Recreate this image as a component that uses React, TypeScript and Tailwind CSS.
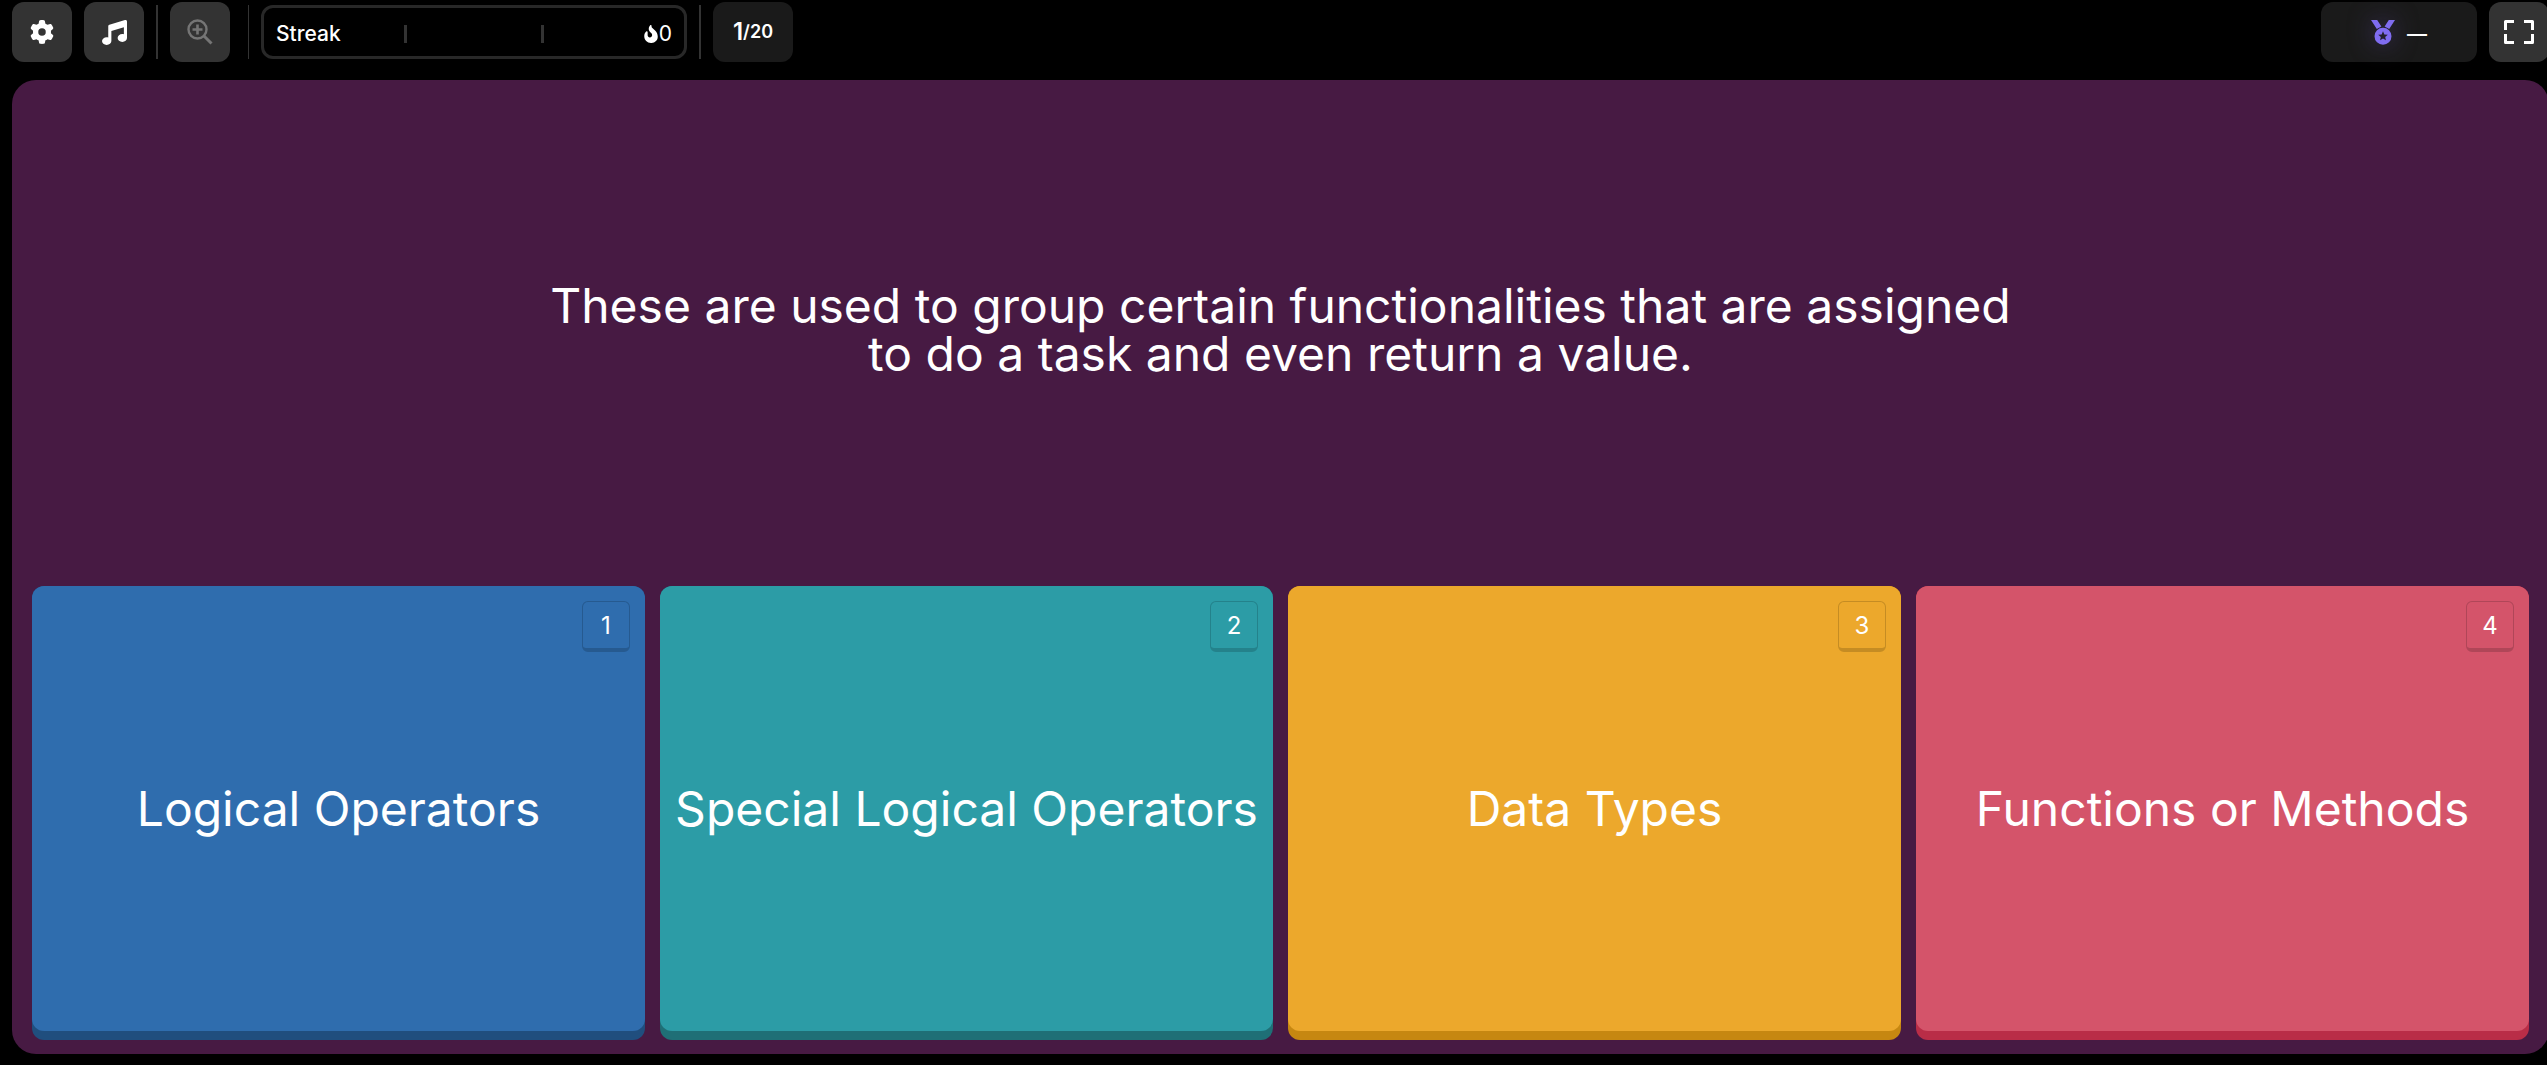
import type { ReactNode } from "react";
import { FaFireFlameCurved, FaGear, FaMusic } from "react-icons/fa6";

function ZoomInIcon() {
  return (
    <svg viewBox="0 0 26 26" className="size-[26px]" fill="none" stroke="currentColor" aria-hidden="true">
      <circle cx="10.5" cy="10.5" r="9" strokeWidth="2.4" />
      <path d="M10.5 5.5v10M5.5 10.5h10" strokeWidth="2.6" />
      <path d="M17 17l7.5 7.5" strokeWidth="3" />
    </svg>
  );
}

function MedalIcon() {
  return (
    <svg viewBox="0 0 24 25" className="h-[25px] w-6" fill="currentColor" aria-hidden="true">
      <path d="M0 0h6.2l4.2 6.6-4.6 2.4zM24 0h-6.2l-4.2 6.6 4.6 2.4z" />
      <path
        fillRule="evenodd"
        d="M12 7.8a8.5 8.5 0 1 1 0 17a8.5 8.5 0 0 1 0-17zM12 11.3L13.35 14.44L16.76 14.75L14.19 17.01L14.94 20.35L12 18.6L9.06 20.35L9.81 17.01L7.24 14.75L10.65 14.44z"
      />
    </svg>
  );
}

function FullscreenIcon() {
  return (
    <svg viewBox="0 0 30 24" className="h-6 w-[30px]" fill="none" stroke="currentColor" strokeWidth="3" strokeLinejoin="round" aria-hidden="true">
      <path d="M1.5 10V1.5H10M20 1.5h8.5V10M1.5 14v8.5H10M20 22.5h8.5V14" />
    </svg>
  );
}

function IconButton({ label, disabled, children }: { label: string; disabled?: boolean; children: ReactNode }) {
  return (
    <button
      type="button"
      aria-label={label}
      disabled={disabled}
      className="flex size-[60px] shrink-0 items-center justify-center rounded-xl bg-[#333333] text-white disabled:text-[#757575]"
    >
      {children}
    </button>
  );
}

function Divider() {
  return <div className="h-[54px] w-0.5 shrink-0 bg-[#333333]" />;
}

const answers = [
  { text: "Logical Operators", face: "bg-[#2f6dae]", edge: "bg-[#204e7e]", badge: "border-[#265a90]" },
  { text: "Special Logical Operators", face: "bg-[#2c9ca6]", edge: "bg-[#1f6f76]", badge: "border-[#24828b]" },
  { text: "Data Types", face: "bg-[#eca82c]", edge: "bg-[#c68711]", badge: "border-[#c58c23]" },
  { text: "Functions or Methods", face: "bg-[#d4546a]", edge: "bg-[#b92d47]", badge: "border-[#b04658]" },
];

export default function App() {
  return (
    <div className="flex min-h-screen flex-col overflow-hidden bg-black pb-[11px] font-['Inter',sans-serif] text-white">
      <header className="-mr-0.5 flex items-center justify-between pt-0.5 pl-3">
        <div className="flex items-center gap-3">
          <IconButton label="Settings">
            <FaGear className="size-6" />
          </IconButton>
          <IconButton label="Music">
            <FaMusic className="size-[25px]" />
          </IconButton>
          <Divider />
          <IconButton label="Zoom in" disabled>
            <ZoomInIcon />
          </IconButton>
          <div className="flex items-center gap-3 pl-1.5">
            <div className="h-[54px] w-px bg-[#333333]" />
            <div className="grid h-[54px] w-[426px] grid-cols-3 items-center rounded-xl border-3 border-[#282828] pt-1 text-[21px]">
              <span className="pl-3 font-medium">Streak</span>
              <span className="h-[18px] border-x-3 border-[#333333]" />
              <span className="flex items-center justify-end pr-3">
                <FaFireFlameCurved className="h-[18px] w-4" />
                <span>0</span>
              </span>
            </div>
            <Divider />
            <div className="flex h-[60px] w-20 items-center justify-center rounded-xl bg-[#1a1a1a] font-semibold">
              <span className="text-2xl">1</span>
              <span className="text-lg">/20</span>
            </div>
          </div>
        </div>
        <div className="flex items-center gap-3">
          <div className="flex h-[60px] w-[156px] items-center justify-center gap-3 rounded-xl bg-[#1a1a1a]">
            <span className="text-[#7f6cf0] drop-shadow-[0_0_12px_#45386e]">
              <MedalIcon />
            </span>
            <span className="pt-1 text-xl font-semibold">—</span>
          </div>
          <IconButton label="Full screen">
            <FullscreenIcon />
          </IconButton>
        </div>
      </header>

      <main className="mt-[18px] -mr-0.5 ml-3 flex grow flex-col rounded-3xl bg-[#471a43] px-5 pb-3.5">
        <div className="flex grow items-center justify-center pb-1.5">
          <h1 className="max-w-[1500px] text-center text-5xl leading-12">
            These are used to group certain functionalities that are assigned to do a task and even return a value.
          </h1>
        </div>
        <div className="grid grid-cols-4 gap-[15px]">
          {answers.map(({ text, face, edge, badge }, i) => (
            <button key={text} type="button" className={`rounded-xl pb-[9px] ${edge}`}>
              <span className={`relative flex h-[445px] items-center justify-center rounded-xl text-5xl leading-12 ${face}`}>
                <span className="whitespace-nowrap">{text}</span>
                <span
                  className={`absolute top-[15px] right-[15px] flex h-[51px] w-12 items-center justify-center rounded-md border border-b-4 pt-0.5 text-2xl ${badge}`}
                >
                  {i + 1}
                </span>
              </span>
            </button>
          ))}
        </div>
      </main>
    </div>
  );
}
